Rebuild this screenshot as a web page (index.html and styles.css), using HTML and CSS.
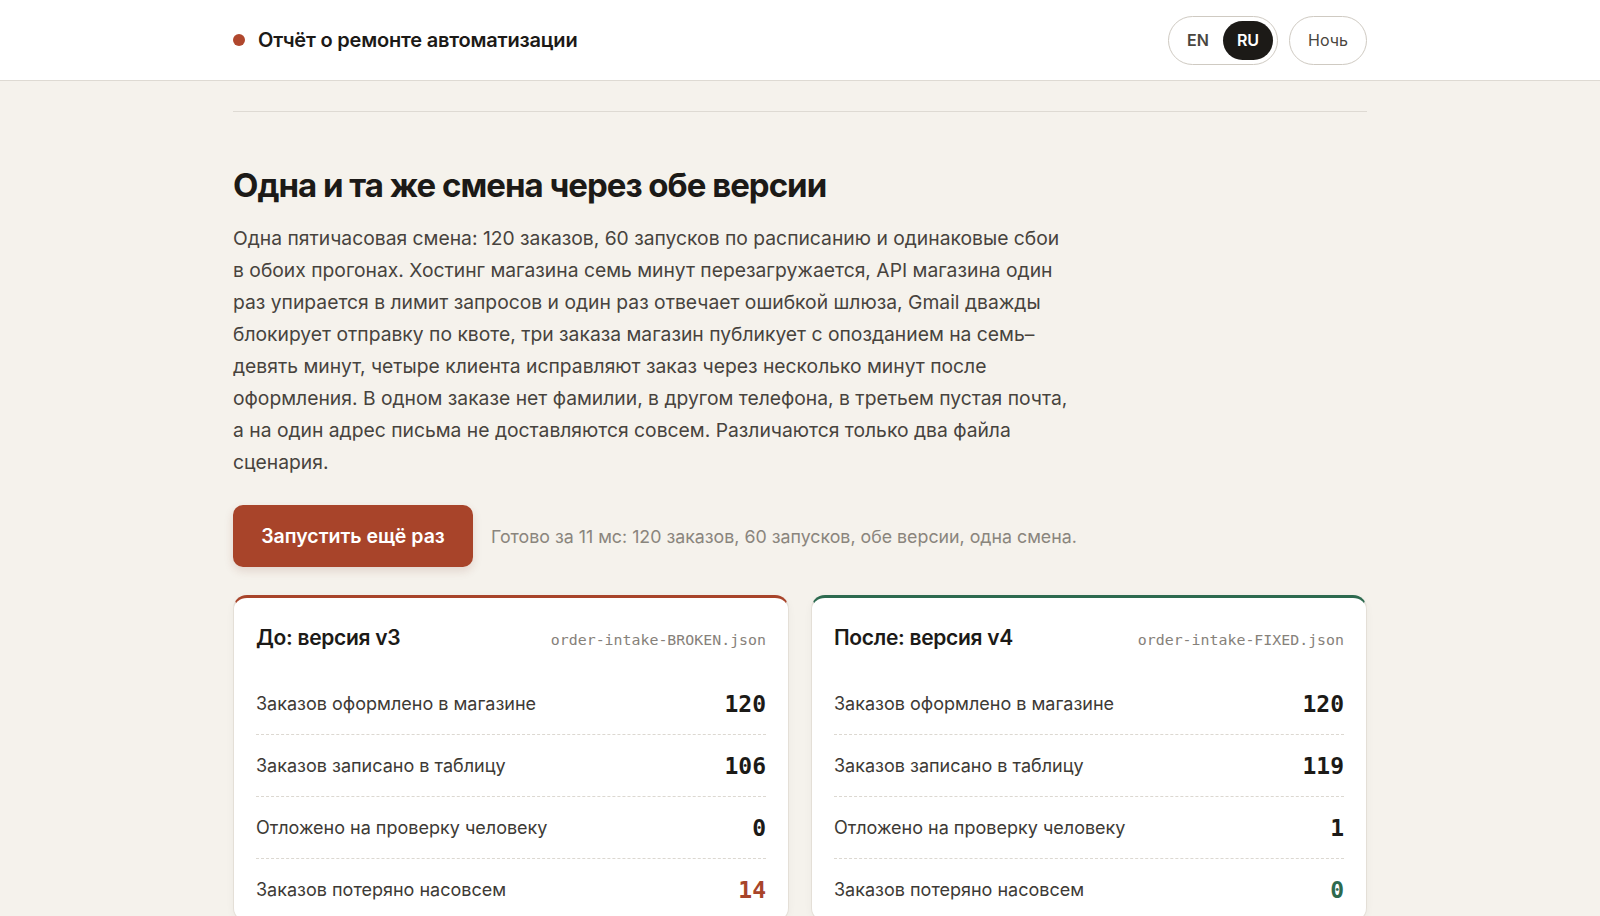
FILE: index.html
```html
<!DOCTYPE html>
<html lang="ru">
<head>
    <meta charset="UTF-8">
    <meta name="viewport" content="width=device-width, initial-scale=1.0">
    <title>Отчёт о ремонте автоматизации</title>
    <link rel="stylesheet" href="styles.css">
</head>
<body>
    <header class="topbar">
        <div class="topbar-inner">
            <div class="brand">
                <span class="brand-dot"></span>
                <span class="brand-title">Отчёт о ремонте автоматизации</span>
            </div>
            <div class="topbar-controls">
                <div class="lang-switch">
                    <button class="lang-btn">EN</button>
                    <button class="lang-btn active">RU</button>
                </div>
                <button class="theme-btn">Ночь</button>
            </div>
        </div>
    </header>

    <main class="page">
        <hr class="divider">

        <section class="replay">
            <h2>Одна и та же смена через обе версии</h2>
            <p class="lead">Одна пятичасовая смена: 120 заказов, 60 запусков по расписанию и одинаковые сбои в обоих прогонах. Хостинг магазина семь минут перезагружается, API магазина один раз упирается в лимит запросов и один раз отвечает ошибкой шлюза, Gmail дважды блокирует отправку по квоте, три заказа магазин публикует с опозданием на семь–девять минут, четыре клиента исправляют заказ через несколько минут после оформления. В одном заказе нет фамилии, в другом телефона, в третьем пустая почта, а на один адрес письма не доставляются совсем. Различаются только два файла сценария.</p>

            <div class="run-row">
                <button class="run-btn" id="runButton">Запустить ещё раз</button>
                <span class="run-status" id="runStatus">Готово за 11 мс: 120 заказов, 60 запусков, обе версии, одна смена.</span>
            </div>

            <div class="compare">
                <div class="card card-before">
                    <div class="card-head">
                        <h3>До: версия v3</h3>
                        <code class="file">order-intake-BROKEN.json</code>
                    </div>
                    <ul class="stats">
                        <li><span>Заказов оформлено в магазине</span><b>120</b></li>
                        <li><span>Заказов записано в таблицу</span><b>106</b></li>
                        <li><span>Отложено на проверку человеку</span><b>0</b></li>
                        <li><span>Заказов потеряно насовсем</span><b class="bad">14</b></li>
                    </ul>
                </div>
                <div class="card card-after">
                    <div class="card-head">
                        <h3>После: версия v4</h3>
                        <code class="file">order-intake-FIXED.json</code>
                    </div>
                    <ul class="stats">
                        <li><span>Заказов оформлено в магазине</span><b>120</b></li>
                        <li><span>Заказов записано в таблицу</span><b>119</b></li>
                        <li><span>Отложено на проверку человеку</span><b>1</b></li>
                        <li><span>Заказов потеряно насовсем</span><b class="good">0</b></li>
                    </ul>
                </div>
            </div>
        </section>
    </main>
</body>
</html>
```

FILE: styles.css
```css
body {
    font-family: Inter, "Noto Sans", sans-serif;
    margin: 0;
    padding: 0;
    background-color: #f5f2ec;
    color: #1c1a17;
}

.topbar {
    background-color: #fff;
    border-bottom: 1px solid #dedad3;
    height: 80px;
}

.topbar-inner {
    max-width: 1134px;
    height: 100%;
    margin: 0 auto;
    display: flex;
    align-items: center;
    justify-content: space-between;
}

.brand {
    display: flex;
    align-items: center;
    gap: 13px;
}

.brand-dot {
    width: 12px;
    height: 12px;
    border-radius: 50%;
    background-color: #b0472d;
}

.brand-title {
    font-size: 20px;
    font-weight: 600;
    letter-spacing: -0.2px;
}

.topbar-controls {
    display: flex;
    align-items: center;
    gap: 11px;
}

.lang-switch {
    display: flex;
    align-items: center;
    padding: 4px;
    border: 1px solid #cfcac2;
    border-radius: 999px;
    background: #fff;
}

.lang-btn {
    border: none;
    background: none;
    font-family: inherit;
    font-size: 16px;
    font-weight: 600;
    color: #4a4640;
    padding: 0;
    width: 50px;
    height: 39px;
    border-radius: 999px;
    cursor: pointer;
}

.lang-btn.active {
    background-color: #1c1a17;
    color: #fff;
}

.theme-btn {
    border: 1px solid #cfcac2;
    background: #fff;
    font-family: inherit;
    font-size: 16px;
    color: #4a4640;
    width: 78px;
    height: 49px;
    border-radius: 999px;
    cursor: pointer;
}

.page {
    max-width: 1134px;
    margin: 0 auto;
    padding-top: 30px;
}

.divider {
    border: none;
    border-top: 1px solid #dedad3;
    margin: 0;
}

.replay h2 {
    font-size: 33px;
    font-weight: 700;
    letter-spacing: -1px;
    margin: 53px 0 17px;
}

.lead {
    max-width: 840px;
    font-size: 19.3px;
    line-height: 32px;
    color: #47433d;
    margin: 0 0 27px;
}

.run-row {
    display: flex;
    align-items: center;
    gap: 18px;
    margin-bottom: 28px;
}

.run-btn {
    background-color: #a8442a;
    color: #fff;
    border: none;
    font-family: inherit;
    font-size: 19.5px;
    font-weight: 600;
    width: 240px;
    height: 62px;
    border-radius: 10px;
    box-shadow: 0 4px 10px rgba(120, 50, 30, 0.15);
    cursor: pointer;
}

.run-status {
    font-size: 17.8px;
    color: #8a857d;
}

.compare {
    display: grid;
    grid-template-columns: 1fr 1fr;
    gap: 22px;
}

.card {
    background: #fff;
    border: 1px solid #e4dfd7;
    border-top: 3px solid #a8442a;
    border-radius: 14px;
    padding: 27px 22px 0;
    box-shadow: 0 2px 8px rgba(0, 0, 0, 0.04);
}

.card-after {
    border-top-color: #2d6a4f;
}

.card-head {
    display: flex;
    align-items: baseline;
    justify-content: space-between;
    margin-bottom: 23px;
}

.card-head h3 {
    margin: 0;
    font-size: 21px;
    font-weight: 600;
    letter-spacing: -0.3px;
}

.file {
    font-family: "DejaVu Sans Mono", "Liberation Mono", monospace;
    font-size: 14.9px;
    color: #86817a;
}

.stats {
    list-style: none;
    padding: 0;
    margin: 0;
}

.stats li {
    display: flex;
    align-items: center;
    justify-content: space-between;
    height: 61px;
    border-bottom: 1px dashed #dcd8d1;
}

.stats li span {
    font-size: 18px;
    color: #3d3a35;
}

.stats li b {
    font-family: "DejaVu Sans Mono", "Liberation Mono", monospace;
    font-size: 23px;
    font-weight: 700;
    color: #1c1a17;
}

.stats li b.bad {
    color: #a8442a;
}

.stats li b.good {
    color: #2d6a4f;
}
```
